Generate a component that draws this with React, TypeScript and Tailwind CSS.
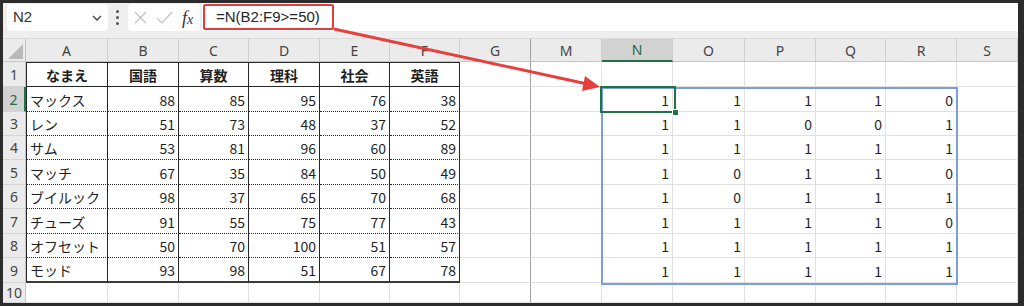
import React from 'react'
import clsx from 'clsx'

const COLS = [
  { key: 'A', w: 'w-[82px]' },
  { key: 'B', w: 'w-[71px]' },
  { key: 'C', w: 'w-[70px]' },
  { key: 'D', w: 'w-[71px]' },
  { key: 'E', w: 'w-[70px]' },
  { key: 'F', w: 'w-[70px]' },
  { key: 'G', w: 'w-[71px]' },
  { key: 'M', w: 'w-[71px]' },
  { key: 'N', w: 'w-[71px]' },
  { key: 'O', w: 'w-[72px]' },
  { key: 'P', w: 'w-[71px]' },
  { key: 'Q', w: 'w-[70px]' },
  { key: 'R', w: 'w-[71px]' },
  { key: 'S', w: 'flex-1' },
]

const ROW_H = [
  'h-[25px]',
  'h-[25px]',
  'h-[24px]',
  'h-[24px]',
  'h-[25px]',
  'h-[24px]',
  'h-[25px]',
  'h-[24px]',
  'h-[25px]',
  'h-[20px]',
]

const HEAD = ['なまえ', '国語', '算数', '理科', '社会', '英語']

const PEOPLE: [string, number, number, number, number, number][] = [
  ['マックス', 88, 85, 95, 76, 38],
  ['レン', 51, 73, 48, 37, 52],
  ['サム', 53, 81, 96, 60, 89],
  ['マッチ', 67, 35, 84, 50, 49],
  ['ブイルック', 98, 37, 65, 70, 68],
  ['チューズ', 91, 55, 75, 77, 43],
  ['オフセット', 50, 70, 100, 51, 57],
  ['モッド', 93, 98, 51, 67, 78],
]

// what goes in a cell for row r (1-based) and column index ci
function cellValue(r: number, ci: number): { text: string; kind: 'head' | 'name' | 'num' } | null {
  if (r === 1 && ci <= 5) return { text: HEAD[ci], kind: 'head' }
  if (r >= 2 && r <= 9) {
    const p = PEOPLE[r - 2]
    if (ci === 0) return { text: p[0], kind: 'name' }
    if (ci <= 5) return { text: String(p[ci]), kind: 'num' }
    if (ci >= 8 && ci <= 12) {
      const score = p[ci - 7] as number
      return { text: score >= 50 ? '1' : '0', kind: 'num' }
    }
  }
  return null
}

function cellBorder(r: number, ci: number) {
  const inTable = ci <= 5 && r <= 9
  if (inTable) {
    return clsx(
      'border-r border-r-[#262626]',
      r === 1 && 'border-t border-t-[#262626]',
      ci === 0 && 'border-l border-l-[#262626]',
      r === 1 && 'border-b border-b-[#262626]',
      r === 9 && 'border-b-2 border-b-[#3a3a3a]',
      r > 1 && r < 9 && 'border-b border-b-[#262626] [border-bottom-style:dotted]'
    )
  }
  return clsx(
    'border-r border-b border-b-[#e1e1e1]',
    ci === 6 ? 'border-r-[#a3a3a3]' : 'border-r-[#e1e1e1]'
  )
}

function NameBox() {
  return (
    <div className="ml-[4px] mt-[1px] flex h-[27px] w-[101px] items-center justify-between rounded-[4px] bg-white pl-[6px] pr-[6px]">
      <span className="font-['Liberation_Sans',sans-serif] text-[15px] text-[#333]">N2</span>
      <svg width="10" height="6" viewBox="0 0 10 6">
        <path d="M1 1 L5 5 L9 1" fill="none" stroke="#444" strokeWidth="1.4" />
      </svg>
    </div>
  )
}

function FxBox() {
  return (
    <div className="ml-[8px] mt-[1px] flex h-[27px] w-[72px] items-center rounded-[4px] bg-white pl-[6px]">
      <svg width="13" height="13" viewBox="0 0 13 13">
        <path d="M1 1 L12 12 M12 1 L1 12" stroke="#c2c2c2" strokeWidth="1.2" />
      </svg>
      <svg width="17" height="13" viewBox="0 0 17 13" className="ml-[9px]">
        <path d="M1 7 L6 12 L16 1" fill="none" stroke="#c2c2c2" strokeWidth="1.2" />
      </svg>
      <span className="ml-[9px] font-['Liberation_Serif',serif] text-[18px] leading-none text-[#333] italic">
        f<span className="text-[14px]">x</span>
      </span>
    </div>
  )
}

export default function App() {
  return (
    <div className="h-[306px] w-[1024px] bg-[#2b2b2b] pt-[3px] pl-[3px] pr-[6px] pb-[3px]">
      <div className="relative flex h-[300px] w-[1015px] flex-col overflow-hidden bg-white">
        {/* formula bar */}
        <div className="flex h-[35px] items-start bg-[#eeeeee]">
          <NameBox />
          <div className="ml-[6px] mt-[7px] flex h-[15px] w-[6px] flex-col items-center justify-between">
            <span className="h-[3px] w-[3px] rounded-full bg-[#555]" />
            <span className="h-[3px] w-[3px] rounded-full bg-[#555]" />
            <span className="h-[3px] w-[3px] rounded-full bg-[#555]" />
          </div>
          <FxBox />
          <div className="ml-[2px] flex h-[28px] flex-1 items-start bg-white">
            <div className="ml-[1px] mt-[1px] flex h-[26px] w-[131px] items-center rounded-[2px] border-2 border-[#e23d3d] pl-[11px]">
              <span className="font-['Liberation_Sans',sans-serif] text-[15px] text-[#262626]">=N(B2:F9&gt;=50)</span>
            </div>
          </div>
        </div>

        {/* column headers */}
        <div className="flex h-[24px] border-t border-t-[#dadada] bg-[#ebebeb] font-['Noto_Sans',sans-serif] text-[14px] text-[#444]">
          <div className="flex w-[23px] items-end justify-end border-r border-b border-[#c4c4c4] pr-[2px] pb-[2px]">
            <svg width="15" height="15" viewBox="0 0 15 15">
              <path d="M15 0 L15 15 L0 15 Z" fill="#b9b9b9" />
            </svg>
          </div>
          {COLS.map((c, ci) => (
            <div
              key={c.key}
              className={clsx(
                c.w,
                'flex items-center justify-center border-r',
                ci === 6 ? 'border-r-[#a3a3a3]' : 'border-r-[#cfcfcf]',
                c.key === 'N'
                  ? 'border-b-2 border-b-[#217346] bg-[#d2d2d2] text-[#1e6b40]'
                  : 'border-b border-b-[#c4c4c4]'
              )}
            >
              {c.key}
            </div>
          ))}
        </div>

        {/* rows */}
        {ROW_H.map((h, i) => {
          const r = i + 1
          const active = r === 2
          return (
            <div key={r} className={clsx('flex', h)}>
              <div
                className={clsx(
                  'flex w-[23px] items-center justify-center border-b border-b-[#d4d4d4] font-["Noto_Sans",sans-serif] text-[14px]',
                  active
                    ? 'border-r-2 border-r-[#217346] bg-[#d2d2d2] text-[#1e6b40]'
                    : 'border-r border-r-[#c4c4c4] bg-[#ebebeb] text-[#444]'
                )}
              >
                {r}
              </div>
              {COLS.map((c, ci) => {
                const v = cellValue(r, ci)
                return (
                  <div
                    key={c.key}
                    className={clsx(
                      c.w,
                      'flex items-center overflow-hidden font-["Noto_Sans_CJK_JP",sans-serif] text-[14px] leading-none text-[#1f1f1f]',
                      cellBorder(r, ci),
                      v?.kind === 'head' && 'justify-center font-bold',
                      v?.kind === 'name' && 'justify-start pl-[3px] pt-[1px]',
                      v?.kind === 'num' && 'justify-end pr-[3px] pt-[1px]'
                    )}
                  >
                    {v?.text}
                  </div>
                )
              })}
            </div>
          )
        })}

        {/* spill range and active cell */}
        <div className="pointer-events-none absolute left-[598px] top-[84px] h-[198px] w-[357px] border-2 border-[#7c9fdb]" />
        <div className="pointer-events-none absolute left-[597px] top-[83px] h-[27px] w-[76px] border-2 border-[#217346]" />
        <div className="pointer-events-none absolute left-[669px] top-[106px] h-[7px] w-[7px] border border-white bg-[#217346]" />

        {/* red annotation arrow */}
        <svg className="pointer-events-none absolute left-0 top-0" width="1015" height="300" viewBox="0 0 1015 300">
          <line x1="331" y1="26" x2="582" y2="80.5" stroke="#e5403d" strokeWidth="3" />
          <polygon points="597,84 579,88 582,73" fill="#e5403d" />
        </svg>
      </div>
    </div>
  )
}
